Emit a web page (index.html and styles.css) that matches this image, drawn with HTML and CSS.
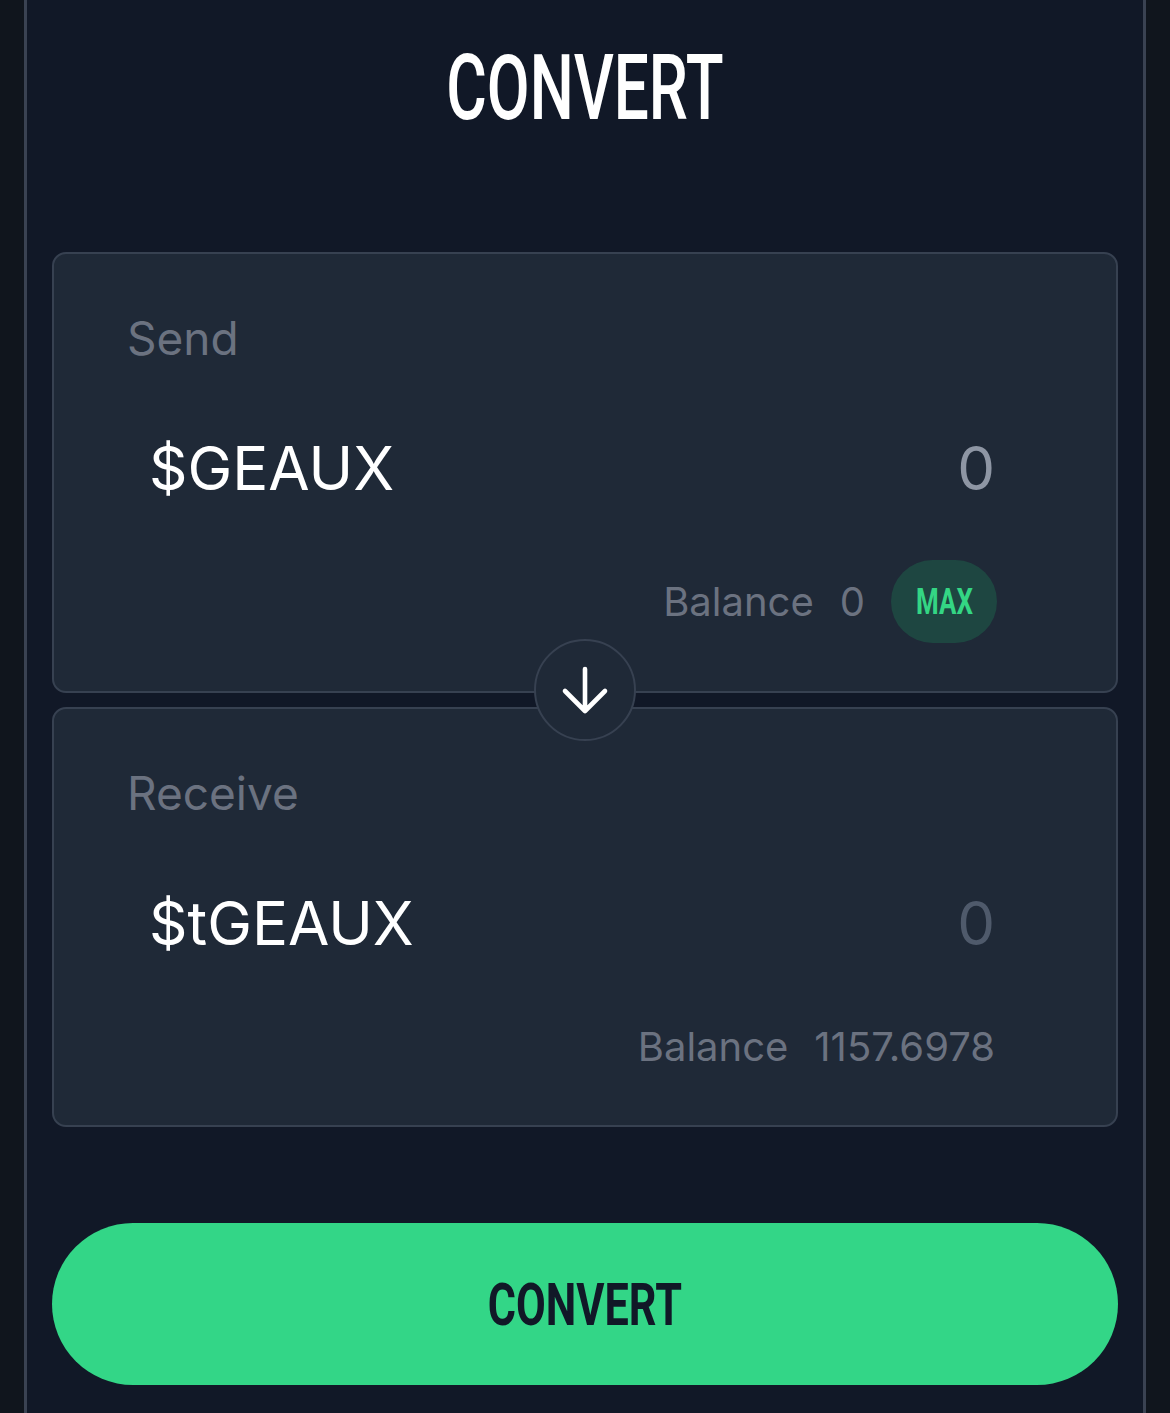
FILE: index.html
```html
<!DOCTYPE html>
<html lang="en">
<head>
    <meta charset="UTF-8">
    <title>Convert</title>
    <link rel="stylesheet" href="styles.css">
</head>
<body>
    <div class="convert-frame">
        <h1 class="convert-title"><span>CONVERT</span></h1>

        <div class="swap-box">
            <div class="swap-card">
                <div class="swap-label">Send</div>
                <div class="swap-row">
                    <span class="token-name">$GEAUX</span>
                    <span class="token-amount">0</span>
                </div>
                <div class="balance-row">
                    <span>Balance</span>
                    <span>0</span>
                    <button class="max-btn"><span>MAX</span></button>
                </div>
            </div>

            <div class="swap-divider">
                <div class="swap-arrow">
                    <svg width="100" height="100" viewBox="0 0 100 100">
                        <path d="M50 29 V70 M30 51 L50 71 L70 51" fill="none" stroke="#fff" stroke-width="4.6" stroke-linecap="round" stroke-linejoin="round"/>
                    </svg>
                </div>
            </div>

            <div class="swap-card">
                <div class="swap-label">Receive</div>
                <div class="swap-row">
                    <span class="token-name">$tGEAUX</span>
                    <span class="token-amount muted">0</span>
                </div>
                <div class="balance-row">
                    <span>Balance</span>
                    <span>1157.6978</span>
                </div>
            </div>
        </div>

        <button class="convert-btn"><span>CONVERT</span></button>
    </div>
</body>
</html>
```

FILE: styles.css
```css
body {
    margin: 0;
    background-color: #10151d;
    font-family: Inter, "Noto Sans", sans-serif;
}
.convert-frame {
    margin: 0 24px;
    min-height: 1413px;
    box-sizing: border-box;
    background-color: #111827;
    border-left: 3px solid #3a4252;
    border-right: 3px solid #3a4252;
    padding: 0 25px 0 25px;
}
.convert-title {
    margin: 0;
    padding-top: 44px;
    text-align: center;
    font-family: Roboto, sans-serif;
    font-weight: 500;
    font-size: 90px;
    line-height: 90px;
    color: #ffffff;
}
.convert-title span {
    display: inline-block;
    transform: scaleX(0.69);
}
.swap-box {
    margin-top: 118px;
}
.swap-card {
    background-color: #1f2937;
    border: 2px solid #374151;
    border-radius: 14px;
    padding: 57px 121px 48px 73px;
}
.swap-label {
    font-size: 46px;
    line-height: 55px;
    color: #6b7280;
}
.swap-row {
    display: flex;
    justify-content: space-between;
    margin-top: 66px;
    font-size: 60px;
    line-height: 72px;
}
.token-name {
    color: #ffffff;
    margin-left: 22px;
}
.token-amount {
    color: #8e96a4;
}
.token-amount.muted {
    color: #4f5a6b;
}
.balance-row {
    display: flex;
    justify-content: flex-end;
    align-items: center;
    gap: 26px;
    margin-top: 56px;
    min-height: 62px;
    font-size: 40px;
    color: #6b7280;
}
.max-btn {
    width: 106px;
    height: 83px;
    border: none;
    border-radius: 42px;
    background-color: #1e4641;
    color: #34d684;
    font-family: Roboto, sans-serif;
    font-weight: 700;
    font-size: 36px;
    padding: 0;
    margin-right: -2px;
}
.max-btn span {
    display: inline-block;
    transform: scaleX(0.72);
}
.swap-divider {
    position: relative;
    height: 14px;
}
.swap-arrow {
    position: absolute;
    left: 50%;
    top: -54px;
    margin-left: -51px;
    width: 98px;
    height: 98px;
    border-radius: 50%;
    border: 2px solid #374151;
    background-color: #1f2937;
}
.swap-arrow svg {
    display: block;
    margin: -1px;
}
.convert-btn {
    display: block;
    width: 100%;
    height: 162px;
    margin-top: 96px;
    border: none;
    border-radius: 81px;
    background-color: #33d687;
    color: #111827;
    font-family: Roboto, sans-serif;
    font-weight: 700;
    font-size: 60px;
}
.convert-btn span {
    display: inline-block;
    transform: scaleX(0.72);
}
```
